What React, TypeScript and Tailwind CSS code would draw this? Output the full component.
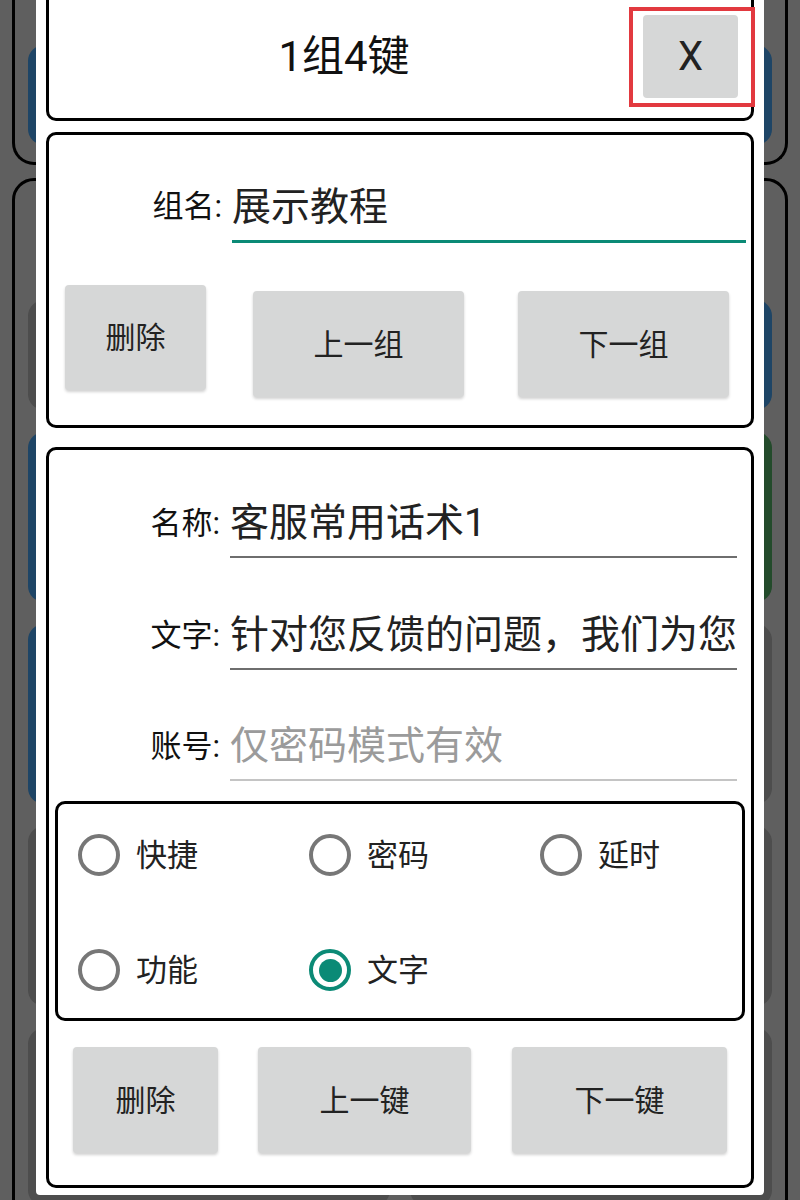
import React from "react";

function Pill({ color, h }: { color: string; h: string }) {
  return <div className={`${color} ${h} rounded-[16px]`} />;
}

function Btn({ children, className }: { children: React.ReactNode; className: string }) {
  return (
    <div
      className={`${className} flex items-center justify-center rounded-[4px] bg-[#d6d7d7] text-[30px] text-[#222] shadow-[0_2px_3px_rgba(0,0,0,0.18)]`}
    >
      {children}
    </div>
  );
}

function Radio({ label, checked }: { label: string; checked?: boolean }) {
  return (
    <div className="flex items-center">
      {checked ? (
        <div className="flex h-[42px] w-[42px] items-center justify-center rounded-full border-4 border-[#0b8a76]">
          <div className="h-[23px] w-[23px] rounded-full bg-[#0b8a76]" />
        </div>
      ) : (
        <div className="h-[42px] w-[42px] rounded-full border-4 border-[#777777]" />
      )}
      <span className="ml-[16px] text-[31px] leading-none text-[#222]">{label}</span>
    </div>
  );
}

function Field({
  label,
  value,
  placeholder,
  line,
  className,
}: {
  label: string;
  value?: string;
  placeholder?: string;
  line: string;
  className: string;
}) {
  return (
    <div className={`flex ${className}`}>
      <div className="flex h-[62px] w-[171px] shrink-0 items-center justify-end pb-[6px] text-[31px] text-[#111]">
        {label}
      </div>
      <div
        className={`ml-[10px] mr-[14px] flex h-[62px] min-w-0 flex-1 items-center overflow-hidden whitespace-nowrap border-b-2 pb-[6px] text-[39px] leading-none ${line} ${
          value ? "text-[#222]" : "text-[#9b9b9b]"
        }`}
      >
        {value ?? placeholder}
      </div>
    </div>
  );
}

export default function App() {
  return (
    <div className="relative h-[1200px] w-[800px] overflow-hidden bg-[#5f5f5f] font-['Roboto','Noto_Sans_CJK_SC',sans-serif]">
      {/* dimmed background app */}
      <div className="flex flex-col px-3">
        <div className="-mt-[20px] h-[185px] rounded-b-[22px] border-[3px] border-t-0 border-black px-[13px] pt-[65px]">
          <div className="grid grid-cols-2 gap-x-5">
            <Pill color="bg-[#1e4566]" h="h-[100px]" />
            <Pill color="bg-[#1e4566]" h="h-[100px]" />
          </div>
        </div>
        <div className="mt-[13px] h-[1100px] rounded-t-[22px] border-[3px] border-black px-[13px] pt-[119px]">
          <div className="grid grid-cols-2 gap-x-5 gap-y-[22px]">
            <Pill color="bg-[#4d4d4d]" h="h-[110px]" />
            <Pill color="bg-[#1e4566]" h="h-[110px]" />
            <Pill color="bg-[#1e4566]" h="h-[170px]" />
            <Pill color="bg-[#234b2b]" h="h-[170px]" />
            <Pill color="bg-[#1e4566]" h="h-[180px]" />
            <Pill color="bg-[#4d4d4d]" h="h-[180px]" />
            <Pill color="bg-[#4d4d4d]" h="h-[180px]" />
            <Pill color="bg-[#4d4d4d]" h="h-[180px]" />
            <Pill color="bg-[#4d4d4d]" h="h-[178px]" />
            <Pill color="bg-[#4d4d4d]" h="h-[178px]" />
          </div>
        </div>
      </div>

      {/* dialog */}
      <div className="absolute left-[36px] top-0 flex h-[1195px] w-[728px] flex-col overflow-hidden rounded-b-[4px] bg-white px-[10px]">
        {/* header */}
        <div className="relative -mt-[20px] flex h-[141px] shrink-0 rounded-[10px] border-[3px] border-black pt-[32px]">
          <div className="flex h-[83px] flex-1 items-center justify-center pr-[4px] text-[42px] leading-none text-[#111]">
            1组4键
          </div>
          <div className="mr-[13px] flex h-[83px] w-[95px] items-center justify-center rounded-[4px] bg-[#d6d7d7] text-[40px] text-[#222]">
            X
          </div>
          <div className="absolute right-[-4px] top-[24px] h-[100px] w-[126px] border-4 border-[#e2393f]" />
        </div>

        {/* group card */}
        <div className="mt-[11px] flex h-[296px] shrink-0 flex-col rounded-[10px] border-[3px] border-black">
          <div className="mt-[46px] flex">
            <div className="flex h-[62px] w-[173px] shrink-0 items-center justify-end pb-[9px] text-[31px] text-[#111]">
              组名:
            </div>
            <div className="ml-[10px] mr-[5px] flex h-[62px] flex-1 items-center border-b-[3px] border-[#0b8a76] pb-[6px] text-[39px] leading-none text-[#222]">
              展示教程
            </div>
          </div>
          <div className="mt-[42px] flex items-start">
            <Btn className="ml-[16px] h-[105px] w-[141px]">删除</Btn>
            <Btn className="ml-[47px] mt-[6px] h-[106px] w-[211px]">上一组</Btn>
            <Btn className="ml-[54px] mt-[6px] h-[106px] w-[211px]">下一组</Btn>
          </div>
        </div>

        {/* key card */}
        <div className="mt-[19px] flex h-[741px] shrink-0 flex-col rounded-[10px] border-[3px] border-black">
          <Field className="mt-[46px]" label="名称:" value="客服常用话术1" line="border-[#6e6e6e]" />
          <Field className="mt-[50px]" label="文字:" value="针对您反馈的问题，我们为您" line="border-[#6e6e6e]" />
          <Field className="mt-[49px]" label="账号:" placeholder="仅密码模式有效" line="border-[#c4c4c4]" />

          <div className="mx-[6px] mt-[20px] h-[220px] rounded-[10px] border-[3px] border-black pl-[20px] pt-[30px]">
            <div className="grid grid-cols-[231px_231px_1fr] gap-y-[73px]">
              <Radio label="快捷" />
              <Radio label="密码" />
              <Radio label="延时" />
              <Radio label="功能" />
              <Radio label="文字" checked />
            </div>
          </div>

          <div className="mt-[26px] flex">
            <Btn className="ml-[24px] h-[106px] w-[145px]">删除</Btn>
            <Btn className="ml-[40px] h-[106px] w-[213px]">上一键</Btn>
            <Btn className="ml-[41px] h-[106px] w-[215px]">下一键</Btn>
          </div>
        </div>
      </div>
    </div>
  );
}
